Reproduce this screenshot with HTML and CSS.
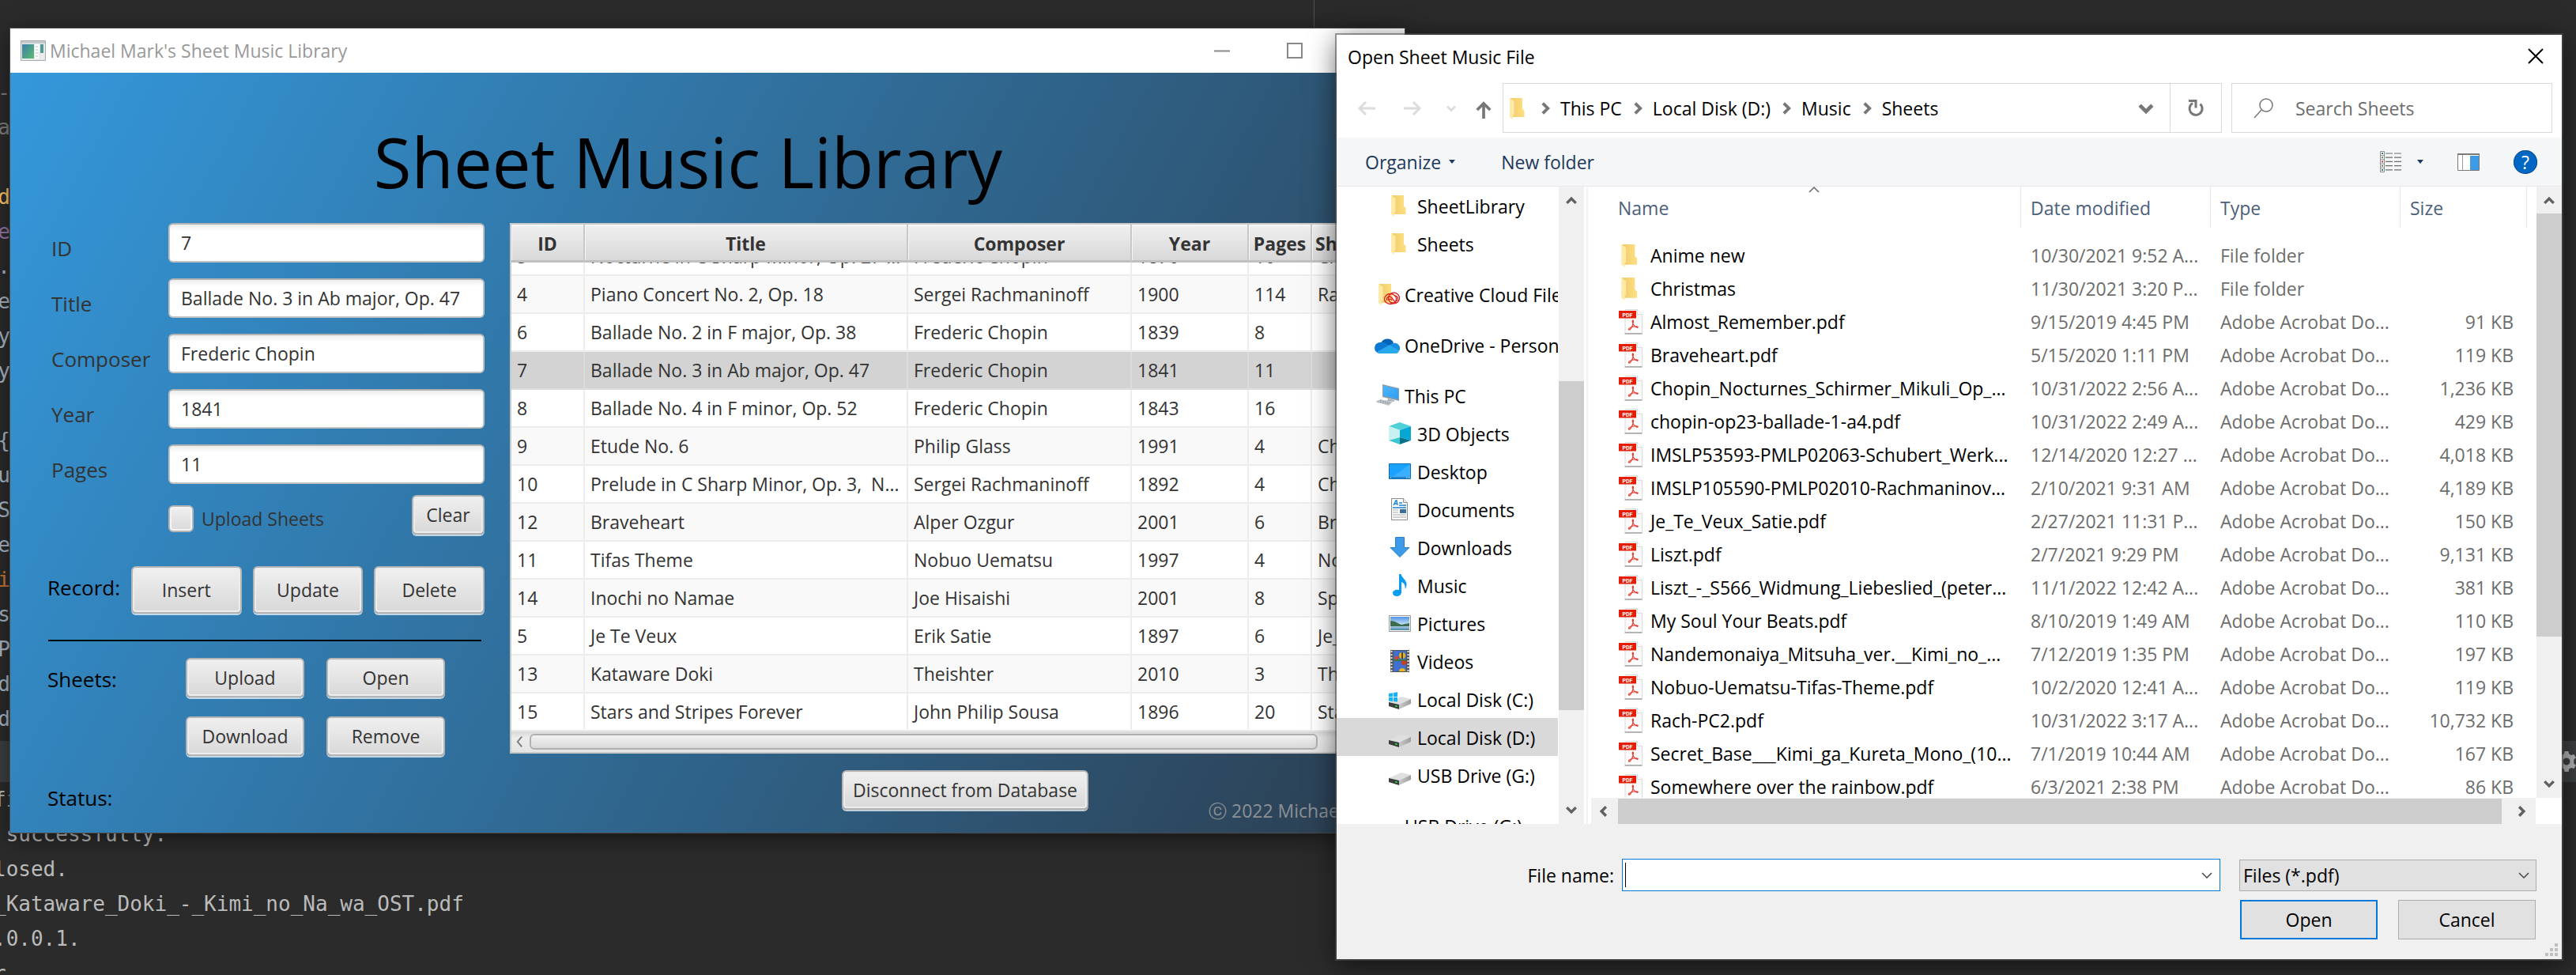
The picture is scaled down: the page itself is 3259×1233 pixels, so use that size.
FILE: index.html
```html
<!DOCTYPE html>
<html lang="en">
<head>
<meta charset="utf-8">
<title>Sheet Music Library</title>
<link rel="stylesheet" href="styles.css">
</head>
<body>
<svg class="sprite" aria-hidden="true">
  <defs>
    <linearGradient id="gFolder" x1="0" x2="1"><stop offset="0" stop-color="#f0cc6b"/><stop offset="1" stop-color="#fddf82"/></linearGradient>
    <linearGradient id="gScreen" x1="0" x2="1" y2="1"><stop offset="0" stop-color="#4db5fb"/><stop offset="1" stop-color="#2f9ff3"/></linearGradient>
    <linearGradient id="gDesk" x1="0" x2="1" y2="1"><stop offset="0" stop-color="#1ba1ff"/><stop offset=".5" stop-color="#1ba1ff"/><stop offset=".52" stop-color="#39adff"/><stop offset="1" stop-color="#3fb0ff"/></linearGradient>
    <linearGradient id="gSky" x2="0" y2="1"><stop offset="0" stop-color="#4f94e6"/><stop offset=".6" stop-color="#cfe4f7"/><stop offset="1" stop-color="#4a86ab"/></linearGradient>
    <linearGradient id="gDrive" x1="0" x2="1"><stop offset="0" stop-color="#c9cacc"/><stop offset="1" stop-color="#9b9da0"/></linearGradient>
    <linearGradient id="gPage" x2="0" y2="1"><stop offset="0" stop-color="#f4f4f5"/><stop offset="1" stop-color="#fdfdfd"/></linearGradient>
    <linearGradient id="gApp" x1="0" x2="1" y2="1"><stop offset="0" stop-color="#3a7fa5"/><stop offset="1" stop-color="#5dbb75"/></linearGradient>
  </defs>
  <symbol id="i-folder" viewBox="0 0 28 28">
    <path d="M4 1h15v14l2.500 2v8H4z" fill="url(#gFolder)"/>
    <path d="M3 1l5.500 4v17l-1.500 1v5L3 25z" fill="#ffe9a6"/>
  </symbol>
  <symbol id="i-cc" viewBox="0 0 32 28">
    <path d="M6 1h15v13l2 2v9H6z" fill="url(#gFolder)"/>
    <path d="M5 1l5.500 4v17l-1.500 1v5L5 25z" fill="#ffe9a6"/>
    <ellipse cx="20" cy="20" rx="7.500" ry="6.500" fill="none" stroke="#e02020" stroke-width="1.300"/>
    <ellipse cx="24.500" cy="19" rx="7" ry="6.800" fill="none" stroke="#e02020" stroke-width="1.300"/>
    <path d="M16 22c-2-4 3-7 6-3l3 4c5 1 6-6 1-7M18 22c0-3 3-2 4 0M20 25h7" fill="none" stroke="#e02020" stroke-width="1.300"/>
  </symbol>
  <symbol id="i-onedrive" viewBox="0 0 32 28">
    <path d="M8 12a9 9 0 0 1 16-1l-4 6-9-2z" fill="#0763b8"/>
    <path d="M7 25a7 7 0 0 1 0-14c4-1 7 0 12 5l-13 9z" fill="#0b78d4"/>
    <path d="M19 15c3-3 6-4 8-3a6.500 6.500 0 0 1 4 10z" fill="#1690df"/>
    <path d="M3 23l16-9 12 8c-1 2-2 3-4 3H7c-2 0-3-1-4-2z" fill="#28a8ea"/>
  </symbol>
  <symbol id="i-pc" viewBox="0 0 32 28">
    <path d="M10 0l21 5v16l-21-5z" fill="#8f9aa3"/><path d="M11 1.500l19 4.500v13l-19-4.500z" fill="url(#gScreen)"/>
    <path d="M17 18l8 2v2l-9-1z" fill="#a9b1b7"/><path d="M1 22l6-3 16 3-5 5z" fill="#c3c9ce"/><path d="M4 22l15 3M7 20.500l13 3" stroke="#8d959b" stroke-dasharray="2 1"/>
  </symbol>
  <symbol id="i-3d" viewBox="0 0 28 28">
    <path d="M0 5l14-5 14 5-14 5z" fill="#52d0d8"/><path d="M0 5l14 5v9L0 23z" fill="#c9f1f3"/><path d="M28 5l-14 5v9l14 4z" fill="#06a7d3"/>
    <path d="M0 23l14-4v9z" fill="#3cc7d0"/><path d="M28 23l-14-4v9z" fill="#07738b"/>
  </symbol>
  <symbol id="i-desktop" viewBox="0 0 28 28"><path d="M.5 4.500h27v19H.5z" fill="url(#gDesk)" stroke="#0c6fb5"/><path d="M1 22h26" stroke="#0f5d96"/><path d="M22 22h1M24 22h1M26 22h1M2 22h1" stroke="#fff"/></symbol>
  <symbol id="i-doc" viewBox="0 0 28 28">
    <path d="M3.500.5h15l5 5v22h-20z" fill="#fff" stroke="#8e8e8e"/><path d="M18.500.5v5h5" fill="#eee" stroke="#8e8e8e"/>
    <path d="M6 9l3-6h1l1 6M7 7h4" fill="none" stroke="#1a82d2" stroke-width="1.400"/><path d="M13 6h4M13 9h9M5 12h17" stroke="#1a82d2" stroke-width="1.300"/>
    <path d="M5 15h7M5 18h7M5 21h17M5 24h17" stroke="#a8a8a8" stroke-width="1.200"/><path d="M14 14h8v5h-8z" fill="#3b6f9c"/>
  </symbol>
  <symbol id="i-down" viewBox="0 0 28 28"><path d="M8.500 1.500h11v13h6.500L14 26.500 2 14.500h6.500z" fill="#3c9ae9" stroke="#2a80c8"/></symbol>
  <symbol id="i-music" viewBox="0 0 28 28"><path d="M13 0h2.500c1 5 7 7 7 13 0 3-1 5-2 6 1-6-2-8-4.500-9v13c0 3-3 5-6 5s-5-2-5-4c0-3 4-5 8-4z" fill="#0a9cf0"/></symbol>
  <symbol id="i-pics" viewBox="0 0 28 28"><path d="M.5 4.500h27v20H.5z" fill="#fff" stroke="#9a9a9a"/><path d="M2 6h24v17H2z" fill="url(#gSky)"/><path d="M2 11c5 0 9 3 14 5l10-2v4H2z" fill="#3d6b4e"/></symbol>
  <symbol id="i-video" viewBox="0 0 28 28">
    <path d="M2 0h24v28H2z" fill="#555"/><path d="M6 1h16v12H6zM6 14h16v13H6z" fill="#3f6fd0"/><path d="M3.500 1v27M24.500 1v27" stroke="#e8e8e8" stroke-width="2" stroke-dasharray="2 2"/>
    <circle cx="17" cy="7" r="4" fill="#e8b31c"/><path d="M17 3v8" stroke="#222" stroke-width="1.500"/><circle cx="10" cy="10" r="2.500" fill="#d8452d"/><path d="M6 12h16v1.500H6z" fill="#2b8a3a"/>
    <circle cx="19" cy="16" r="3" fill="#d03c1c"/><path d="M13 27a4 4 0 0 1 8 0z" fill="#e8b31c"/>
  </symbol>
  <symbol id="i-drive" viewBox="0 0 28 28">
    <path d="M0 18l16-7 12 3-15 7z" fill="#dedfe1"/><path d="M0 18l13 3v6L0 23z" fill="#3a3b3d"/><path d="M13 21l15-7v6l-15 7z" fill="url(#gDrive)"/><path d="M8 22.500l3 1" stroke="#35d43a" stroke-width="1.500"/>
  </symbol>
  <symbol id="i-drivec" viewBox="0 0 28 28"><use href="#i-drive" width="28" height="28"/><path d="M0 7l5-.8v5H0zM6 6l5-.8v6H6zM0 12h5v5l-5-.6zM6 12h5v5.600L6 17z" fill="#14b4f4"/></symbol>
  <symbol id="i-pdf" viewBox="0 0 30 32">
    <path d="M8 .5h15.500l6 6V30.500H8z" fill="url(#gPage)" stroke="#dcdcdc"/><path d="M7.500 31h22" stroke="#a2a2a2" stroke-width="1.500"/><path d="M23.500.5v6h6" fill="#fff" stroke="#dcdcdc"/>
    <path d="M0 2h22v9.500H0z" fill="#e51d05"/>
    <text x="11" y="9.500" text-anchor="middle" class="pdf-tag">PDF</text>
    <path d="M18 14c-1.500 0-.5 4 1 6 1.500 2 4 4 5 3s-3-1.500-5.500-1-6 2-6 3.500 2.500 0 4-3 2.500-8.500 1.500-8.500z" fill="none" stroke="#e8392b" stroke-width="1.200"/>
  </symbol>
  <symbol id="i-chev" viewBox="0 0 14 14"><path d="M2 4.500l5 5 5-5" fill="none" stroke="currentColor" stroke-width="3"/></symbol>
  <symbol id="i-thin" viewBox="0 0 14 14"><path d="M1 4l6 6 6-6" fill="none" stroke="currentColor" stroke-width="1.500"/></symbol>
</svg>

<main class="desktop">
  <section class="ide" aria-label="Code editor">
    <div class="ide-strip"></div>
    <div class="gutter">
      <span class="dim">-</span><span class="dim">na</span><span></span><span class="fn">d</span><span class="field">e</span><span>.</span><span>e</span><span>y</span><span>y</span><span></span><span>{</span><span>u</span><span>S</span><span>e</span><span class="kw">i</span><span>s</span><span>P</span><span>d</span><span>d</span>
    </div>
    <div class="tool-head"><svg class="gear" viewBox="0 0 28 28" aria-hidden="true"><path d="M11.500 1h5l.7 3.500 2.800 1.600 3.400-1.200 2.500 4.300-2.700 2.400v4.800l2.700 2.400-2.500 4.300-3.400-1.200-2.800 1.600-.7 3.500h-5l-.7-3.500L8 21.900l-3.400 1.200-2.500-4.300 2.700-2.400v-4.800L2.100 9.200l2.500-4.300L8 6.100l2.800-1.600zM14 9.500a4.500 4.500 0 1 0 0 9 4.500 4.500 0 0 0 0-9z" fill="#afb1b3"/></svg></div>
    <pre class="console">fi
 successfully.
losed.
_Kataware_Doki_-_Kimi_no_Na_wa_OST.pdf
.0.0.1.
r</pre>
  </section>

  <section class="app" aria-label="Michael Mark's Sheet Music Library">
    <header class="app-bar">
      <svg class="app-icon" viewBox="0 0 32 26" aria-hidden="true"><path d="M.5.5h31v25H.5z" fill="#e9ecee" stroke="#a5a9ac"/><path d="M1 1h30v3H1z" fill="#c5cacd"/><path d="M2 5h15v18H2z" fill="url(#gApp)"/><path d="M25 5h4v11h-4z" fill="#4f9a92"/><path d="M18 5h5v18h-5z" fill="#fff"/><path d="M19 8h3M19 12h3M19 16h3M19 20h3" stroke="#b5b9bc"/></svg>
      <span class="app-name">Michael Mark's Sheet Music Library</span>
      <button class="cap" aria-label="Minimize"><svg viewBox="0 0 20 20"><path d="M0 10.500h20" stroke="#888" stroke-width="2"/></svg></button>
      <button class="cap" aria-label="Maximize"><svg viewBox="0 0 20 20"><path d="M1 1h18v18H1z" fill="none" stroke="#888" stroke-width="2"/></svg></button>
      <button class="cap" aria-label="Close"><svg viewBox="0 0 20 20"><path d="M1 1l18 18M19 1L1 19" stroke="#888" stroke-width="2"/></svg></button>
    </header>
    <div class="app-body">
      <h1>Sheet Music Library</h1>
      <div class="cols">
        <form class="panel">
          <div class="fields">
            <label for="f-id">ID</label><input id="f-id" value="7">
            <label for="f-title">Title</label><input id="f-title" value="Ballade No. 3 in Ab major, Op. 47">
            <label for="f-comp">Composer</label><input id="f-comp" value="Frederic Chopin">
            <label for="f-year">Year</label><input id="f-year" value="1841">
            <label for="f-pages">Pages</label><input id="f-pages" value="11">
          </div>
          <div class="upload-row">
            <div class="tick"><input type="checkbox" id="f-up"><label for="f-up">Upload Sheets</label></div>
            <button type="button" class="btn">Clear</button>
          </div>
          <div class="record-row">
            <span class="cap-label">Record:</span>
            <button type="button" class="btn">Insert</button><button type="button" class="btn">Update</button><button type="button" class="btn">Delete</button>
          </div>
          <hr>
          <div class="sheet-row">
            <span class="cap-label">Sheets:</span>
            <div class="sheet-btns">
              <button type="button" class="btn">Upload</button><button type="button" class="btn">Open</button>
              <button type="button" class="btn">Download</button><button type="button" class="btn">Remove</button>
            </div>
          </div>
          <p class="status">Status:</p>
        </form>
        <div class="records">
          <div class="grid-box">
            <table class="grid">
              <colgroup><col class="c-id"><col class="c-title"><col class="c-comp"><col class="c-year"><col class="c-pages"><col></colgroup>
              <thead><tr><th>ID</th><th>Title</th><th>Composer</th><th>Year</th><th>Pages</th><th class="last">Sheets</th></tr></thead>
              <tbody>
                <tr class="cut"><td><div><span>3</span></div></td><td><div><span>Nocturne in C Sharp Minor, Op. 27 ...</span></div></td><td><div><span>Frederic Chopin</span></div></td><td><div><span>1870</span></div></td><td><div><span>10</span></div></td><td><div><span>Cho</span></div></td></tr>
                <tr><td>4</td><td>Piano Concert No. 2, Op. 18</td><td>Sergei Rachmaninoff</td><td>1900</td><td>114</td><td>Rach-PC2</td></tr>
                <tr><td>6</td><td>Ballade No. 2 in F major, Op. 38</td><td>Frederic Chopin</td><td>1839</td><td>8</td><td></td></tr>
                <tr class="sel"><td>7</td><td>Ballade No. 3 in Ab major, Op. 47</td><td>Frederic Chopin</td><td>1841</td><td>11</td><td></td></tr>
                <tr><td>8</td><td>Ballade No. 4 in F minor, Op. 52</td><td>Frederic Chopin</td><td>1843</td><td>16</td><td></td></tr>
                <tr><td>9</td><td>Etude No. 6</td><td>Philip Glass</td><td>1991</td><td>4</td><td>Cho</td></tr>
                <tr><td>10</td><td>Prelude in C Sharp Minor, Op. 3, &nbsp;N...</td><td>Sergei Rachmaninoff</td><td>1892</td><td>4</td><td>Cho</td></tr>
                <tr><td>12</td><td>Braveheart</td><td>Alper Ozgur</td><td>2001</td><td>6</td><td>Brav</td></tr>
                <tr><td>11</td><td>Tifas Theme</td><td>Nobuo Uematsu</td><td>1997</td><td>4</td><td>Nob</td></tr>
                <tr><td>14</td><td>Inochi no Namae</td><td>Joe Hisaishi</td><td>2001</td><td>8</td><td>Spir</td></tr>
                <tr><td>5</td><td>Je Te Veux</td><td>Erik Satie</td><td>1897</td><td>6</td><td>Je_T</td></tr>
                <tr><td>13</td><td>Kataware Doki</td><td>Theishter</td><td>2010</td><td>3</td><td>Thei</td></tr>
                <tr><td>15</td><td>Stars and Stripes Forever</td><td>John Philip Sousa</td><td>1896</td><td>20</td><td>Star</td></tr>
              </tbody>
            </table>
            <div class="fx-scroll"><svg viewBox="0 0 10 18" aria-hidden="true"><path d="M8 2L2 9l6 7" fill="none" stroke="#777" stroke-width="2"/></svg><div class="fx-thumb"></div></div>
          </div>
          <div class="foot">
            <button type="button" class="btn">Disconnect from Database</button>
            <span class="copy">ⓒ 2022 Michael Mark</span>
          </div>
        </div>
      </div>
    </div>
  </section>

  <section class="dialog" role="dialog" aria-label="Open Sheet Music File">
    <header class="dlg-bar"><span>Open Sheet Music File</span>
      <button class="plain" aria-label="Close"><svg class="x" viewBox="0 0 20 20"><path d="M1 1l18 18M19 1L1 19" stroke="#000" stroke-width="2"/></svg></button></header>
    <nav class="nav">
      <button class="plain nb-back" aria-label="Back"><svg viewBox="0 0 24 24"><path d="M23 12H3M11 4l-8 8 8 8" fill="none" stroke="#dcdcdc" stroke-width="3"/></svg></button>
      <button class="plain nb-fwd" aria-label="Forward"><svg viewBox="0 0 24 24"><path d="M1 12h20M13 4l8 8-8 8" fill="none" stroke="#dcdcdc" stroke-width="3"/></svg></button>
      <button class="plain nb-recent" aria-label="Recent locations"><svg viewBox="0 0 14 14"><use href="#i-chev"/></svg></button>
      <button class="plain nb-up" aria-label="Up"><svg viewBox="0 0 24 24"><path d="M12 24V3M3 12l9-9 9 9" fill="none" stroke="#777" stroke-width="4"/></svg></button>
      <div class="address">
        <svg class="fold" aria-hidden="true"><use href="#i-folder"/></svg>
        <svg class="sep" aria-hidden="true"><use href="#i-chev"/></svg><a href="#pc">This PC</a>
        <svg class="sep" aria-hidden="true"><use href="#i-chev"/></svg><a href="#d">Local Disk (D:)</a>
        <svg class="sep" aria-hidden="true"><use href="#i-chev"/></svg><a href="#music">Music</a>
        <svg class="sep" aria-hidden="true"><use href="#i-chev"/></svg><a href="#sheets">Sheets</a>
        <button class="plain addr-drop" aria-label="Previous locations"><svg><use href="#i-chev"/></svg></button>
        <button class="plain refresh" aria-label="Refresh"><svg viewBox="0 0 22 22"><path d="M16.500 5.500A8 8 0 1 1 7 4.500" fill="none" stroke="#777" stroke-width="3"/><path d="M2 1.500h9v9" fill="none" stroke="#777" stroke-width="3"/></svg></button>
      </div>
      <div class="search"><svg viewBox="0 0 26 26" aria-hidden="true"><circle cx="16" cy="9" r="8" fill="none" stroke="#777" stroke-width="1.500"/><path d="M10 15L1 25" stroke="#777" stroke-width="1.500"/></svg>
        <input aria-label="Search Sheets" placeholder="Search Sheets"></div>
    </nav>
    <div class="tools">
      <button class="plain">Organize <span class="tri"></span></button><button class="plain newf">New folder</button>
      <button class="plain view" aria-label="Change view"><svg viewBox="0 0 28 27"><path d="M.5.500h5v26h-5zM0 5.700h6M0 10.900h6M0 16.100h6M0 21.300h6" fill="#fff" stroke="#8c8c8c"/><path d="M7 3h20M7 8.200h20M7 13.400h20M7 18.600h20M7 23.800h20" stroke="#6d6d6d" stroke-width="1.200" stroke-dasharray="9 2"/><path d="M2 3h2M2 24h2" stroke="#2f7f74" stroke-width="2"/><path d="M2 13.500h2" stroke="#d0342c" stroke-width="2"/><path d="M2 8.300h2M2 18.700h2" stroke="#6e7f4e" stroke-width="2"/></svg><span class="tri"></span></button>
      <button class="plain pane" aria-label="Preview pane"><svg viewBox="0 0 28 22"><path d="M.5.500h27v21H.5z" fill="#fff" stroke="#7a7a7a"/><path d="M0 1h28" stroke="#7a7a7a" stroke-width="2"/><path d="M6.500 2v19" stroke="#9a9a9a"/><path d="M16 3h11v18H16z" fill="#3f9ae5"/></svg></button>
      <button class="plain help" aria-label="Help">?</button>
    </div>
    <div class="explorer">
      <ul class="tree">
        <li><svg><use href="#i-folder"/></svg><span>SheetLibrary</span></li>
        <li><svg><use href="#i-folder"/></svg><span>Sheets</span></li>
        <li class="top"><svg><use href="#i-cc"/></svg><span>Creative Cloud Files</span></li>
        <li class="top"><svg><use href="#i-onedrive"/></svg><span>OneDrive - Personal</span></li>
        <li class="top"><svg><use href="#i-pc"/></svg><span>This PC</span></li>
        <li><svg><use href="#i-3d"/></svg><span>3D Objects</span></li>
        <li><svg><use href="#i-desktop"/></svg><span>Desktop</span></li>
        <li><svg><use href="#i-doc"/></svg><span>Documents</span></li>
        <li><svg><use href="#i-down"/></svg><span>Downloads</span></li>
        <li><svg><use href="#i-music"/></svg><span>Music</span></li>
        <li><svg><use href="#i-pics"/></svg><span>Pictures</span></li>
        <li><svg><use href="#i-video"/></svg><span>Videos</span></li>
        <li><svg><use href="#i-drivec"/></svg><span>Local Disk (C:)</span></li>
        <li class="on"><svg><use href="#i-drive"/></svg><span>Local Disk (D:)</span></li>
        <li><svg><use href="#i-drive"/></svg><span>USB Drive (G:)</span></li>
        <li class="top"><svg></svg><span>USB Drive (G:)</span></li>
      </ul>
      <div class="vbar tree-bar"><svg class="u"><use href="#i-chev"/></svg><div class="thumb"></div><svg><use href="#i-chev"/></svg></div>
      <div class="list">
        <div class="list-main">
          <div class="files">
            <svg class="sort" aria-hidden="true"><use href="#i-thin"/></svg>
            <table>
              <colgroup><col class="n"><col class="d"><col class="d"><col class="s"><col></colgroup>
              <thead><tr><th>Name</th><th>Date modified</th><th>Type</th><th>Size</th><td></td></tr></thead>
              <tbody>
                <tr><td><svg><use href="#i-folder"/></svg>Anime new</td><td>10/30/2021 9:52 A...</td><td>File folder</td><td></td></tr>
                <tr><td><svg><use href="#i-folder"/></svg>Christmas</td><td>11/30/2021 3:20 P...</td><td>File folder</td><td></td></tr>
                <tr><td><svg><use href="#i-pdf"/></svg>Almost_Remember.pdf</td><td>9/15/2019 4:45 PM</td><td>Adobe Acrobat Do...</td><td>91 KB</td></tr>
                <tr><td><svg><use href="#i-pdf"/></svg>Braveheart.pdf</td><td>5/15/2020 1:11 PM</td><td>Adobe Acrobat Do...</td><td>119 KB</td></tr>
                <tr><td><svg><use href="#i-pdf"/></svg>Chopin_Nocturnes_Schirmer_Mikuli_Op_...</td><td>10/31/2022 2:56 A...</td><td>Adobe Acrobat Do...</td><td>1,236 KB</td></tr>
                <tr><td><svg><use href="#i-pdf"/></svg>chopin-op23-ballade-1-a4.pdf</td><td>10/31/2022 2:49 A...</td><td>Adobe Acrobat Do...</td><td>429 KB</td></tr>
                <tr><td><svg><use href="#i-pdf"/></svg>IMSLP53593-PMLP02063-Schubert_Werk...</td><td>12/14/2020 12:27 ...</td><td>Adobe Acrobat Do...</td><td>4,018 KB</td></tr>
                <tr><td><svg><use href="#i-pdf"/></svg>IMSLP105590-PMLP02010-Rachmaninov...</td><td>2/10/2021 9:31 AM</td><td>Adobe Acrobat Do...</td><td>4,189 KB</td></tr>
                <tr><td><svg><use href="#i-pdf"/></svg>Je_Te_Veux_Satie.pdf</td><td>2/27/2021 11:31 P...</td><td>Adobe Acrobat Do...</td><td>150 KB</td></tr>
                <tr><td><svg><use href="#i-pdf"/></svg>Liszt.pdf</td><td>2/7/2021 9:29 PM</td><td>Adobe Acrobat Do...</td><td>9,131 KB</td></tr>
                <tr><td><svg><use href="#i-pdf"/></svg>Liszt_-_S566_Widmung_Liebeslied_(peter...</td><td>11/1/2022 12:42 A...</td><td>Adobe Acrobat Do...</td><td>381 KB</td></tr>
                <tr><td><svg><use href="#i-pdf"/></svg>My Soul Your Beats.pdf</td><td>8/10/2019 1:49 AM</td><td>Adobe Acrobat Do...</td><td>110 KB</td></tr>
                <tr><td><svg><use href="#i-pdf"/></svg>Nandemonaiya_Mitsuha_ver.__Kimi_no_...</td><td>7/12/2019 1:35 PM</td><td>Adobe Acrobat Do...</td><td>197 KB</td></tr>
                <tr><td><svg><use href="#i-pdf"/></svg>Nobuo-Uematsu-Tifas-Theme.pdf</td><td>10/2/2020 12:41 A...</td><td>Adobe Acrobat Do...</td><td>119 KB</td></tr>
                <tr><td><svg><use href="#i-pdf"/></svg>Rach-PC2.pdf</td><td>10/31/2022 3:17 A...</td><td>Adobe Acrobat Do...</td><td>10,732 KB</td></tr>
                <tr><td><svg><use href="#i-pdf"/></svg>Secret_Base___Kimi_ga_Kureta_Mono_(10...</td><td>7/1/2019 10:44 AM</td><td>Adobe Acrobat Do...</td><td>167 KB</td></tr>
                <tr><td><svg><use href="#i-pdf"/></svg>Somewhere over the rainbow.pdf</td><td>6/3/2021 2:38 PM</td><td>Adobe Acrobat Do...</td><td>86 KB</td></tr>
              </tbody>
            </table>
          </div>
          <div class="vbar file-bar"><svg class="u"><use href="#i-chev"/></svg><div class="thumb"></div><svg><use href="#i-chev"/></svg></div>
        </div>
        <div class="hbar"><svg class="l"><use href="#i-chev"/></svg><div class="thumb"></div><svg class="r"><use href="#i-chev"/></svg></div>
      </div>
    </div>
    <form class="dlg-foot">
      <div class="line">
        <label for="fname">File name:</label>
        <div class="combo"><input id="fname"><svg aria-hidden="true"><use href="#i-thin"/></svg></div>
        <div class="pick"><select aria-label="File type"><option>Files (*.pdf)</option></select><svg aria-hidden="true"><use href="#i-thin"/></svg></div>
      </div>
      <div class="line acts"><button type="button" class="win primary">Open</button><button type="button" class="win">Cancel</button></div>
      <svg class="grip" viewBox="0 0 16 16" aria-hidden="true"><path d="M12 0h4v4h-4zM6 6h4v4H6zM12 6h4v4h-4zM0 12h4v4H0zM6 12h4v4H6zM12 12h4v4h-4z" fill="#bfbfbf"/></svg>
    </form>
  </section>
</main>
</body>
</html>
```
FILE: styles.css
```css
* { box-sizing: border-box; }
body { margin: 0; background: #2b2b2b; color: #000; font: 23px/28px "Open Sans", "Noto Sans", sans-serif; }
button, input, select { font: inherit; color: inherit; margin: 0; }
.sprite { position: absolute; width: 0; height: 0; }
.pdf-tag { font: bold 7px "Roboto", sans-serif; fill: #fff; }
.plain { border: 0; background: none; padding: 0; display: flex; align-items: center; }

.desktop { position: relative; min-height: 100vh; overflow: hidden; }

/* code editor behind the windows */
.ide { font: 26px/44px "DejaVu Sans Mono", monospace; color: #a9b7c6; height: 100vh; overflow: hidden; }
.ide-strip { height: 36px; margin-left: 51%; border-left: 1px solid #515151; }
.gutter { width: 13px; padding-top: 59px; height: 901px; overflow: hidden; }
.gutter span { display: flex; justify-content: flex-end; height: 44px; }
.dim { color: #808080; }
.fn { color: #ffc66d; }
.field { color: #9876aa; }
.kw { color: #cc7832; }
.tool-head { height: 52px; background: #3c3f41; display: flex; justify-content: flex-end; align-items: center; overflow: hidden; }
.gear { width: 28px; height: 28px; flex: none; margin-right: -2px; }
.console { margin: 0 0 0 -8px; color: #bbb; font: inherit; }

/* library window */
.app { position: absolute; left: 13px; right: 1482px; top: 36px; box-shadow: 0 0 0 1px #4a4a4a, 0 6px 30px rgba(0,0,0,.5); }
.app-bar { height: 56px; background: #fff; color: #999; display: flex; align-items: center; padding: 0 37px 0 13px; }
.app-icon { width: 32px; height: 26px; margin-right: 5px; }
.app-name { flex: 1; }
.cap { border: 0; background: none; padding: 0; width: 20px; height: 20px; margin-left: 72px; display: flex; }
.cap svg { width: 20px; height: 20px; }
.app-body { background: linear-gradient(118.5deg, #3498db, #2c3e50); padding: 50px 30px 0 47px; }
h1 { margin: 0; padding-right: 66px; text-align: center; font-size: 87px; line-height: 124px; font-weight: 400; height: 140px; }
.cols { display: flex; gap: 32px; }
.panel { flex: none; width: 553px; padding-bottom: 26px; }
.fields { display: grid; grid-template-columns: 153px 1fr; gap: 20px 0; color: #333; }
.fields label { font-size: 26px; line-height: 36px; padding: 14px 0 0 5px; height: 50px; }
.fields input { height: 50px; border: 2px solid #c2c2c2; border-top-color: #b2b2b2; border-radius: 6px; padding: 0 14px; background: linear-gradient(#ececec, #fff 8px); }
.upload-row { display: flex; height: 52px; margin-top: 14px; padding-left: 153px; color: #333; }
.tick { display: flex; align-items: center; padding-top: 8px; }
.tick input { appearance: none; width: 32px; height: 34px; border: 2px solid #b5b5b5; border-radius: 6px; background: linear-gradient(#f0f0f0, #d9d9d9); box-shadow: inset 0 0 0 2px #f4f4f4; margin-right: 10px; }
.upload-row .btn { margin-left: auto; width: 92px; }
.btn { height: 50px; border: 2px solid #b5b5b5; border-radius: 6px; background: linear-gradient(#f0f0f0, #d8d8d8); box-shadow: inset 0 0 0 2px #ededed, inset 0 2px 0 #fff, 0 2px 0 rgba(255,255,255,.7); color: #333; padding: 0; flex: none; }
.record-row { display: grid; grid-template-columns: 92px 1fr 1fr 1fr; gap: 14px; margin-top: 38px; height: 62px; }
.record-row .btn { height: 60px; }
.cap-label { font-size: 26px; line-height: 54px; }
hr { border: 0; height: 2px; background: #000; margin: 31px 4px 21px 1px; }
.sheet-row { display: flex; }
.sheet-row .cap-label { width: 175px; }
.sheet-btns { display: grid; grid-template-columns: 150px 150px; gap: 24px 28px; }
.status { margin: 35px 0 0; font-size: 26px; line-height: 36px; }

.records { flex: 1; min-width: 0; }
.grid-box { border: 2px solid #c8c8c8; background: #fff; }
.grid { width: 100%; table-layout: fixed; border-collapse: separate; border-spacing: 0; color: #333; }
.c-id { width: 93px; } .c-title { width: 409px; } .c-comp { width: 283px; } .c-year { width: 148px; } .c-pages { width: 80px; }
.grid th { height: 48px; padding: 2px 0 0; font-weight: 700; background: linear-gradient(#f0f0f0, #d8d8d8); border-right: 2px solid #c8c8c8; border-bottom: 3px solid #c0c0c0; box-shadow: inset 1px 2px 0 #f6f6f6; overflow: hidden; white-space: nowrap; }
.grid .last { text-align: left; padding-left: 4px; }
.grid td { height: 48px; padding: 0 0 0 7px; border-right: 2px solid #ededed; border-bottom: 2px solid #ededed; white-space: nowrap; overflow: hidden; }
.grid tr:nth-child(even) td { background: #f9f9f9; }
.grid .sel td, .grid .sel:nth-child(even) td { background: #d3d3d3; border-bottom-color: #dcdcdc; border-right-color: #dcdcdc; }
.grid .cut td { height: 17px; }
.cut div { height: 15px; overflow: hidden; display: flex; align-items: flex-end; }
.cut span { line-height: 46px; height: 46px; flex: none; }
.fx-scroll { height: 26px; display: flex; align-items: center; padding: 0 78px 0 6px; background: linear-gradient(#d8d8d8, #ececec 8px, #e4e4e4); }
.fx-scroll svg { width: 9px; height: 18px; margin-right: 8px; }
.fx-thumb { flex: 1; height: 20px; border: 2px solid #b0b0b0; border-radius: 6px; background: linear-gradient(#f2f2f2, #d9d9d9); }
.foot { display: flex; margin-top: 21px; padding-left: 420px; }
.foot .btn { width: 312px; }
.copy { color: #8b9095; margin: 35px 0 0 152px; line-height: 32px; height: 32px; white-space: nowrap; }

/* open file dialog */
.dialog { position: absolute; left: 1691px; right: 18px; top: 44px; background: #fff; box-shadow: 0 0 0 2px rgba(80,80,80,.55), 0 6px 32px rgba(0,0,0,.6); }
.dlg-bar { height: 61px; padding: 1px 23px 8px 14px; display: flex; align-items: center; justify-content: space-between; }
.dlg-bar span { padding-top: 2px; }
.x { width: 20px; height: 20px; }
.nav { display: flex; padding: 0 12px 6px 26px; height: 69px; }
.nav .nb-back svg, .nav .nb-fwd svg { width: 24px; height: 24px; }
.nb-fwd { margin-left: 34px; }
.nb-recent { margin-left: 30px; color: #dcdcdc; }
.nb-recent svg { width: 14px; height: 14px; }
.nb-up { margin: 4px 13px 0 23px; }
.nb-up svg { width: 22px; height: 22px; }
.address { flex: 1; display: flex; align-items: center; border: 1px solid #d9d9d9; color: #777; }
.address a { color: #000; text-decoration: none; }
.fold { width: 28px; height: 28px; margin: 0 5px; }
.sep { width: 18px; height: 18px; margin: 0 10px 0 11px; transform: rotate(-90deg); }
.address .fold + .sep { margin-left: 6px; }
.addr-drop { margin-left: auto; }
.addr-drop svg { width: 22px; height: 22px; margin-right: 19px; }
.refresh { align-self: stretch; border-left: 1px solid #d9d9d9; width: 65px; justify-content: center; }
.refresh svg { width: 22px; height: 22px; }
.search { width: 406px; margin-left: 12px; border: 1px solid #d9d9d9; display: flex; align-items: center; padding-left: 27px; }
.search svg { width: 26px; height: 26px; }
.search input { border: 0; outline: 0; flex: 1; min-width: 0; padding: 0 0 0 27px; background: none; }
.search input::placeholder { color: #6d6d6d; opacity: 1; }
.tools { height: 62px; background: #f5f6f8; border-bottom: 1px solid #e5e7ea; display: flex; align-items: center; padding: 0 31px 0 36px; color: #1e395b; }
.tri { border: 4px solid transparent; border-top: 5px solid #1e395b; border-bottom: 0; margin-left: 10px; }
.newf { margin-left: 58px; }
.view { margin-left: auto; }
.view svg { width: 28px; height: 27px; }
.view .tri { margin-left: 19px; }
.pane { margin: 0 43px; }
.pane svg { width: 28px; height: 22px; }
.help { width: 30px; height: 30px; border-radius: 15px; background: #0067c5; color: #fff; justify-content: center; box-shadow: inset 0 0 0 1px #1b4f86; }

.explorer { display: flex; height: 806px; }
.tree { list-style: none; margin: 0; padding: 0; width: 280px; overflow: hidden; flex: none; }
.tree li { display: flex; align-items: center; height: 48px; padding-left: 66px; gap: 8px; white-space: nowrap; }
.tree span { padding-top: 2px; }
.tree svg { width: 28px; height: 28px; flex: none; }
.tree .top { padding-left: 48px; gap: 6px; margin-top: 16px; }
.tree .top svg { width: 32px; }
.tree .on { background: #d9d9d9; }
.vbar { width: 32px; background: #f0f0f0; color: #606060; display: flex; flex-direction: column; align-items: center; flex: none; padding: 10px 0; }
.vbar svg, .hbar svg { width: 16px; height: 16px; flex: none; }
.u { transform: rotate(180deg); }
.l { transform: rotate(90deg); }
.r { transform: rotate(-90deg); }
.thumb { background: #cdcdcd; }
.vbar .thumb { width: 32px; }
.vbar svg:last-child { margin-top: auto; }
.tree-bar { margin: 0 3px 0 1px; }
.tree-bar .thumb { margin-top: 220px; height: 416px; }
.file-bar .thumb { margin-top: 8px; height: 535px; }
.list { flex: 1; min-width: 0; border-left: 2px solid #f3f3f3; padding-left: 4px; display: flex; flex-direction: column; }
.list-main { flex: 1; min-height: 0; display: flex; }
.files { flex: 1; min-width: 0; overflow: hidden; position: relative; }
.sort { position: absolute; left: 275px; top: -3px; width: 14px; height: 14px; transform: rotate(180deg); color: #666; }
.files table { width: 100%; table-layout: fixed; border-collapse: separate; border-spacing: 0; color: #6d6d6d; }
.n { width: 544px; } .d { width: 240px; } .s { width: 160px; }
.files th { height: 52px; padding: 2px 0 0 12px; text-align: left; font-weight: 400; color: #4c607a; border-right: 1px solid #e5e5e5; }
.files th:first-child { padding-left: 34px; }
.files tbody::before { content: ""; display: block; height: 14px; }
.files tbody td { height: 42px; padding: 0 0 0 12px; white-space: nowrap; }
.files tbody td:first-child { display: flex; align-items: center; padding-left: 35px; gap: 10px; color: #000; }
.files td:nth-child(4) { text-align: right; padding-right: 17px; }
.files td svg { width: 30px; height: 32px; flex: none; }
.hbar { height: 33px; background: #f0f0f0; margin-right: 33px; display: flex; align-items: center; justify-content: space-between; padding: 0 10px 0 8px; color: #606060; flex: none; }
.hbar .thumb { flex: 1; height: 32px; margin: 0 17px 0 10px; }

.dlg-foot { background: #f0f0f0; padding: 44px 32px 25px; position: relative; }
.line { display: flex; align-items: center; }
.line label { width: 319px; text-align: right; margin-right: 10px; }
.combo, .pick { display: grid; align-items: center; height: 41px; }
.combo > *, .pick > * { grid-area: 1 / 1; }
.combo svg, .pick svg { width: 14px; height: 14px; justify-self: end; margin-right: 9px; pointer-events: none; color: #444; }
.combo { flex: 1; background: linear-gradient(#000, #000) 3px 4px / 1px 31px no-repeat #fff; border: 1px solid #0078d7; }
.combo input { border: 0; outline: 0; background: none; height: 39px; min-width: 0; }
.pick { width: 376px; margin-left: 24px; }
.pick select { appearance: none; height: 40px; border: 1px solid #adadad; border-radius: 0; background: #e1e1e1; padding: 0 4px; }
.acts { justify-content: flex-end; gap: 26px; margin: 11px 1px 0 0; }
.win { width: 174px; height: 50px; border: 1px solid #adadad; background: #e1e1e1; }
.primary { border: 2px solid #0078d7; }
.grip { position: absolute; right: 5px; bottom: 4px; width: 16px; height: 16px; }
```
